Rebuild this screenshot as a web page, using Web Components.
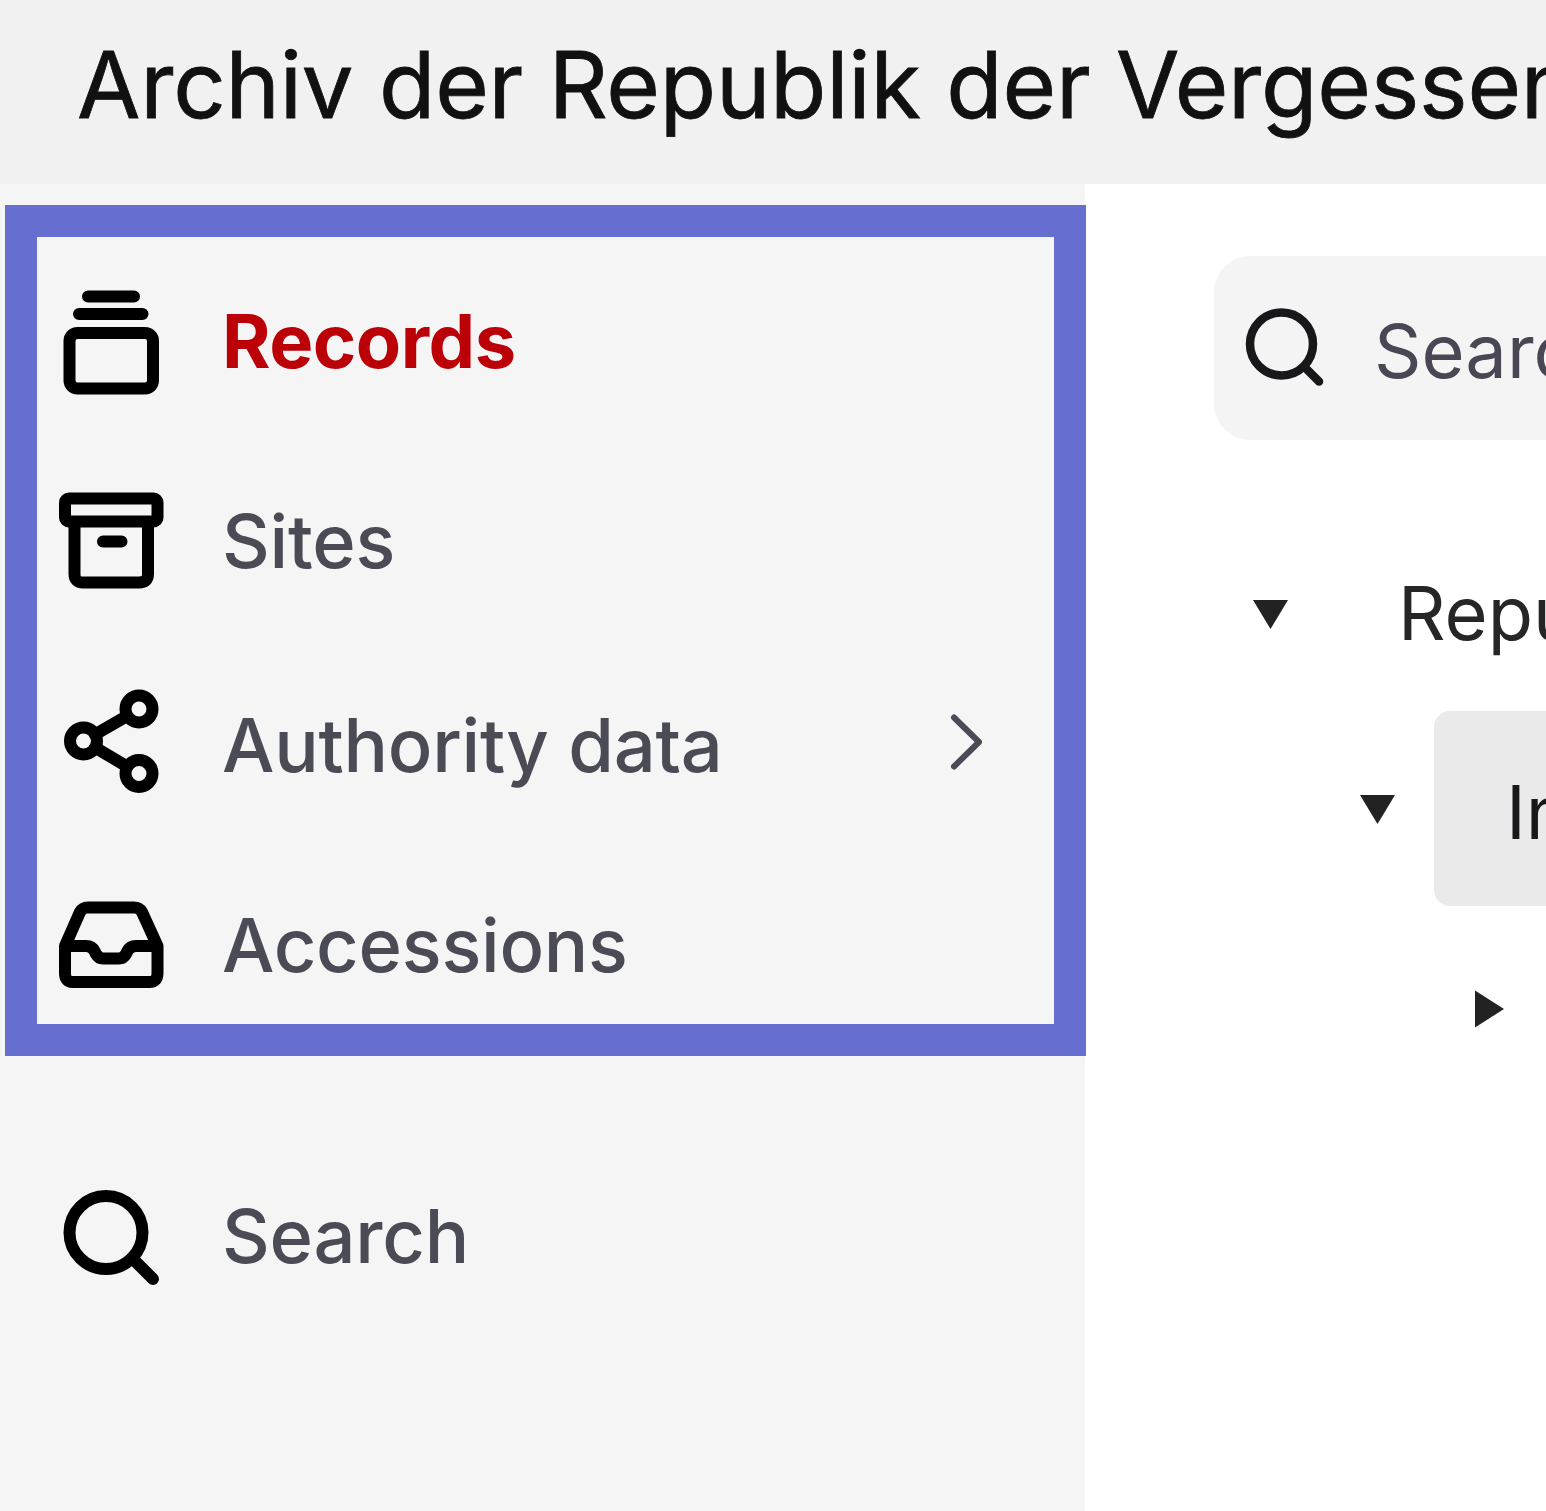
<!DOCTYPE html>
<html lang="en">
<head>
<meta charset="utf-8">
<title>Archiv der Republik der Vergessen</title>
<style>
    html, body {
        margin: 0;
        height: 100%;
        overflow: hidden;
        background: #fff;
        font-family: Inter, "Liberation Sans", sans-serif;
    }
</style>
</head>
<body>
<archive-app>
    <span slot="title">Archiv der Republik der Vergessen</span>
    <nav-group slot="nav">
        <nav-item icon="records" active>Records</nav-item>
        <nav-item icon="sites">Sites</nav-item>
        <nav-item icon="authority" expandable>Authority data</nav-item>
        <nav-item icon="accessions">Accessions</nav-item>
    </nav-group>
    <nav-item slot="nav" class="search" icon="search">Search</nav-item>
    <search-box>Search</search-box>
    <record-tree>
        <tree-row level="0" open>Repu</tree-row>
        <tree-row level="1" open selected>In</tree-row>
        <tree-row level="2"></tree-row>
    </record-tree>
</archive-app>

<script>
(() => {

    const icons = {
        records: '<path d="M37 15.500H83M28 33H91.500"/><rect x="18.500" y="52" width="83.500" height="55.500" rx="8"/>',
        sites: '<rect x="14" y="17.500" width="92.500" height="23" rx="4"/><path d="M23.500 41V93Q23.500 101.500 32 101.500H88Q97 101.500 97 93V41M52 60.500H70.500"/>',
        authority: '<circle cx="32.500" cy="56" r="13.500"/><circle cx="88" cy="24" r="13.500"/><circle cx="88" cy="88.500" r="13.500"/><path d="M44 49.500L76 31M44 62.500L76 81.500"/>',
        accessions: '<path d="M14 61V88Q14 97 21.500 97H98.500Q106.500 97 106.500 88V61L91 27Q88.500 22.500 83 22.500H37Q31.500 22.500 29 27L14 61H35Q41 61 43.500 66L45 69Q47.500 73.500 52 73.500H68Q72.500 73.500 75 69L76.500 66Q79 61 85 61H106.500"/>',
        search: '<circle cx="55" cy="56.500" r="36.500"/><path d="M81 82L102 103"/>'
    };

    class BaseElement extends HTMLElement {
        connectedCallback() {
            if (this.shadowRoot) return;
            const template = document.createElement("template");
            template.innerHTML = this.render();
            this.attachShadow({ mode: "open" }).append(template.content.cloneNode(true));
        }
    }

    class ArchiveApp extends BaseElement {
        render() {
            return `
                <header><slot name="title"></slot></header>
                <div class="body">
                    <aside><slot name="nav"></slot></aside>
                    <main><slot></slot></main>
                </div>
                <style>
                    :host {
                        display: flex;
                        flex-direction: column;
                        height: 100vh;
                        overflow: hidden;
                    }
                    header {
                        box-sizing: border-box;
                        flex: none;
                        height: 184px;
                        padding: 29px 0 0 77px;
                        background: #f1f1f1;
                        color: #111;
                        font-size: 92px;
                        letter-spacing: -0.2px;
                        line-height: 112px;
                        white-space: nowrap;
                        -webkit-text-stroke: 0.8px #111;
                    }
                    .body {
                        display: flex;
                        flex: 1;
                        min-height: 0;
                    }
                    aside {
                        box-sizing: border-box;
                        flex: none;
                        width: 1085px;
                        padding: 21px 0 0 5px;
                        background: #f5f5f5;
                    }
                    main {
                        flex: 1;
                        min-width: 0;
                        padding: 72px 0 0 129px;
                        overflow: hidden;
                    }
                    ::slotted(.search) {
                        margin: 80px 0 0 32px;
                    }
                </style>
            `;
        }
    }

    class NavGroup extends BaseElement {
        render() {
            return `
                <slot></slot>
                <style>
                    :host {
                        box-sizing: border-box;
                        display: flex;
                        flex-direction: column;
                        width: 1081px;
                        height: 851px;
                        padding-top: 4px;
                        border: 32px solid #666fcf;
                    }
                    ::slotted([expandable]) {
                        margin-top: 4px;
                    }
                </style>
            `;
        }
    }

    class NavItem extends BaseElement {
        render() {
            const chevron = this.hasAttribute("expandable")
                ? '<svg class="chevron" viewBox="0 0 40 60"><path d="M7 5.500L32 30L7 54.500"/></svg>'
                : '';
            return `
                <svg class="icon" viewBox="0 0 120 120">${icons[this.getAttribute("icon")]}</svg>
                <span class="label"><slot></slot></span>
                ${chevron}
                <style>
                    :host {
                        display: flex;
                        flex: none;
                        align-items: center;
                        height: 200px;
                        padding: 0 67px 0 14px;
                        color: #4b4b55;
                        font-size: 74px;
                        font-weight: 500;
                        letter-spacing: -0.25px;
                        line-height: 90px;
                        white-space: nowrap;
                    }
                    :host([active]) {
                        color: #bb0008;
                        font-weight: 700;
                        letter-spacing: -0.5px;
                    }
                    svg {
                        flex: none;
                        fill: none;
                        stroke-linecap: round;
                        stroke-linejoin: round;
                    }
                    .icon {
                        width: 120px;
                        height: 120px;
                        margin-right: 51px;
                        stroke: #000;
                        stroke-width: 12;
                    }
                    .label {
                        flex: 1;
                    }
                    .chevron {
                        width: 40px;
                        height: 60px;
                        margin-bottom: 6px;
                        stroke: currentColor;
                        stroke-width: 6;
                    }
                </style>
            `;
        }
    }

    class SearchBox extends BaseElement {
        render() {
            return `
                <svg viewBox="0 0 100 100"><circle cx="47.500" cy="46" r="31.500"/><path d="M70 68.500L85 83.500"/></svg>
                <span><slot></slot></span>
                <style>
                    :host {
                        box-sizing: border-box;
                        display: flex;
                        align-items: center;
                        width: 900px;
                        height: 184px;
                        padding-left: 20px;
                        border-radius: 36px;
                        background: #f4f4f4;
                        color: #4b4653;
                        font-size: 74px;
                        line-height: 90px;
                    }
                    svg {
                        width: 100px;
                        height: 100px;
                        margin-right: 40px;
                        fill: none;
                        stroke: #18181b;
                        stroke-width: 8.500;
                        stroke-linecap: round;
                    }
                    span {
                        padding-top: 6px;
                    }
                </style>
            `;
        }
    }

    class RecordTree extends BaseElement {
        render() {
            return `
                <slot></slot>
                <style>
                    :host {
                        display: flex;
                        flex-direction: column;
                        width: 900px;
                        margin-top: 76px;
                    }
                </style>
            `;
        }
    }

    class TreeRow extends BaseElement {
        render() {
            const level = Number(this.getAttribute("level"));
            const indent = [36, 143, 251][level];
            const arrow = this.hasAttribute("open") ? "M3 5H38L20.500 34Z" : "M10 5.500V42.500L39 24Z";
            return `
                <svg viewBox="0 0 42 38"><path d="${arrow}"/></svg>
                <span><slot></slot></span>
                <style>
                    :host {
                        display: flex;
                        align-items: center;
                        height: 195px;
                        padding-left: ${indent}px;
                        color: #262626;
                        font-size: 74px;
                        line-height: 90px;
                    }
                    svg {
                        flex: none;
                        width: 42px;
                        height: 38px;
                        margin-right: 35px;
                        fill: #222;
                        overflow: visible;
                    }
                    span {
                        box-sizing: border-box;
                        flex: 1;
                        height: 195px;
                        padding: 52px 0 0 71px;
                        border-radius: 16px;
                    }
                    :host([selected]) span {
                        padding: 56px 0 0 72px;
                        background: #eaeaea;
                        color: #18181b;
                    }
                </style>
            `;
        }
    }

    customElements.define("archive-app", ArchiveApp);
    customElements.define("nav-group", NavGroup);
    customElements.define("nav-item", NavItem);
    customElements.define("search-box", SearchBox);
    customElements.define("record-tree", RecordTree);
    customElements.define("tree-row", TreeRow);

})()
</script>
</body>
</html>
